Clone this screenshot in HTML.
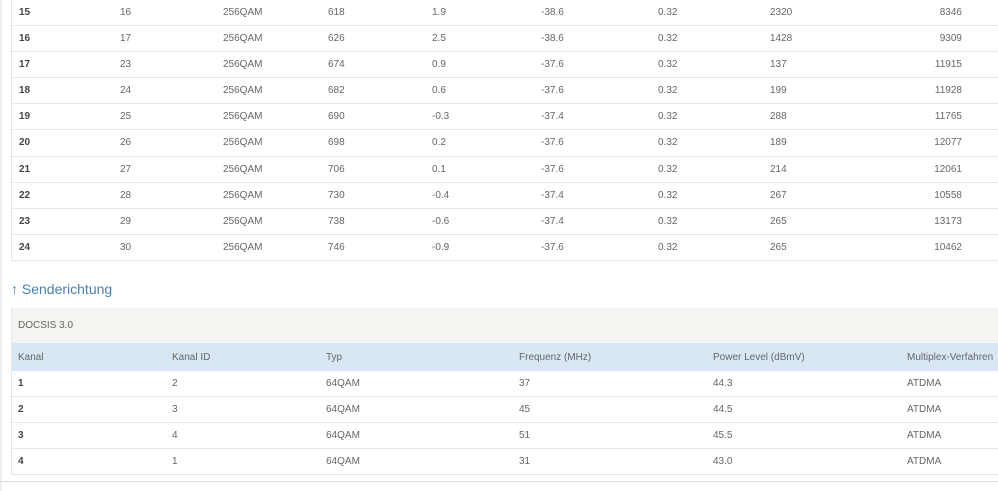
<!DOCTYPE html><html><head><style>
body{margin:0;width:998px;height:491px;overflow:hidden;background:#fff;font-family:"Liberation Sans",sans-serif;font-size:10px;color:#666;position:relative}
.vl{position:absolute;left:0;top:0;width:2px;height:491px;background:#eee}
.t{position:absolute;left:11px;width:987px;border-left:1px solid #e6e6e6}
.r{position:relative;height:25px;border-bottom:1px solid #e6e6e6}
.t1 .r{height:25.1px}
.r span{position:absolute;top:7px}
.r span.b{font-weight:bold;color:#444}
.r span.rt{right:37px}
h3{position:absolute;left:11px;top:281px;margin:0;font-weight:normal;font-size:14px;color:#4a7fae}
.g{position:absolute;left:11px;top:308px;width:987px;height:35px;background:#f5f4f1;border-left:1px solid #e6e6e6}
.g span{position:absolute;left:6px;top:12px}
.h{background:#d9e7f5;border-bottom:none;height:28px}
.h span{top:9px}
</style></head><body>
<div class="vl"></div>
<div class="t t1" style="top:0">
<div class="r"><span class="b" style="left:7px">15</span><span style="left:108px">16</span><span style="left:211px">256QAM</span><span style="left:316px">618</span><span style="left:420px">1.9</span><span style="left:529px">-38.6</span><span style="left:646px">0.32</span><span style="left:758px">2320</span><span class="rt">8346</span></div>
<div class="r"><span class="b" style="left:7px">16</span><span style="left:108px">17</span><span style="left:211px">256QAM</span><span style="left:316px">626</span><span style="left:420px">2.5</span><span style="left:529px">-38.6</span><span style="left:646px">0.32</span><span style="left:758px">1428</span><span class="rt">9309</span></div>
<div class="r"><span class="b" style="left:7px">17</span><span style="left:108px">23</span><span style="left:211px">256QAM</span><span style="left:316px">674</span><span style="left:420px">0.9</span><span style="left:529px">-37.6</span><span style="left:646px">0.32</span><span style="left:758px">137</span><span class="rt">11915</span></div>
<div class="r"><span class="b" style="left:7px">18</span><span style="left:108px">24</span><span style="left:211px">256QAM</span><span style="left:316px">682</span><span style="left:420px">0.6</span><span style="left:529px">-37.6</span><span style="left:646px">0.32</span><span style="left:758px">199</span><span class="rt">11928</span></div>
<div class="r"><span class="b" style="left:7px">19</span><span style="left:108px">25</span><span style="left:211px">256QAM</span><span style="left:316px">690</span><span style="left:420px">-0.3</span><span style="left:529px">-37.4</span><span style="left:646px">0.32</span><span style="left:758px">288</span><span class="rt">11765</span></div>
<div class="r"><span class="b" style="left:7px">20</span><span style="left:108px">26</span><span style="left:211px">256QAM</span><span style="left:316px">698</span><span style="left:420px">0.2</span><span style="left:529px">-37.6</span><span style="left:646px">0.32</span><span style="left:758px">189</span><span class="rt">12077</span></div>
<div class="r"><span class="b" style="left:7px">21</span><span style="left:108px">27</span><span style="left:211px">256QAM</span><span style="left:316px">706</span><span style="left:420px">0.1</span><span style="left:529px">-37.6</span><span style="left:646px">0.32</span><span style="left:758px">214</span><span class="rt">12061</span></div>
<div class="r"><span class="b" style="left:7px">22</span><span style="left:108px">28</span><span style="left:211px">256QAM</span><span style="left:316px">730</span><span style="left:420px">-0.4</span><span style="left:529px">-37.4</span><span style="left:646px">0.32</span><span style="left:758px">267</span><span class="rt">10558</span></div>
<div class="r"><span class="b" style="left:7px">23</span><span style="left:108px">29</span><span style="left:211px">256QAM</span><span style="left:316px">738</span><span style="left:420px">-0.6</span><span style="left:529px">-37.4</span><span style="left:646px">0.32</span><span style="left:758px">265</span><span class="rt">13173</span></div>
<div class="r"><span class="b" style="left:7px">24</span><span style="left:108px">30</span><span style="left:211px">256QAM</span><span style="left:316px">746</span><span style="left:420px">-0.9</span><span style="left:529px">-37.6</span><span style="left:646px">0.32</span><span style="left:758px">265</span><span class="rt">10462</span></div>
</div>
<h3>↑ Senderichtung</h3>
<div class="g"><span>DOCSIS 3.0</span></div>
<div class="t" style="top:343px">
<div class="r h"><span style="left:6px">Kanal</span><span style="left:160px">Kanal ID</span><span style="left:314px">Typ</span><span style="left:507px">Frequenz (MHz)</span><span style="left:701px">Power Level (dBmV)</span><span style="left:895px">Multiplex-Verfahren</span></div>
<div class="r"><span class="b" style="left:6px">1</span><span style="left:160px">2</span><span style="left:314px">64QAM</span><span style="left:507px">37</span><span style="left:701px">44.3</span><span style="left:895px">ATDMA</span></div>
<div class="r"><span class="b" style="left:6px">2</span><span style="left:160px">3</span><span style="left:314px">64QAM</span><span style="left:507px">45</span><span style="left:701px">44.5</span><span style="left:895px">ATDMA</span></div>
<div class="r"><span class="b" style="left:6px">3</span><span style="left:160px">4</span><span style="left:314px">64QAM</span><span style="left:507px">51</span><span style="left:701px">45.5</span><span style="left:895px">ATDMA</span></div>
<div class="r"><span class="b" style="left:6px">4</span><span style="left:160px">1</span><span style="left:314px">64QAM</span><span style="left:507px">31</span><span style="left:701px">43.0</span><span style="left:895px">ATDMA</span></div>
</div>
<div style="position:absolute;left:0;top:481px;width:998px;height:1px;background:#ddd"></div>
</body></html>
